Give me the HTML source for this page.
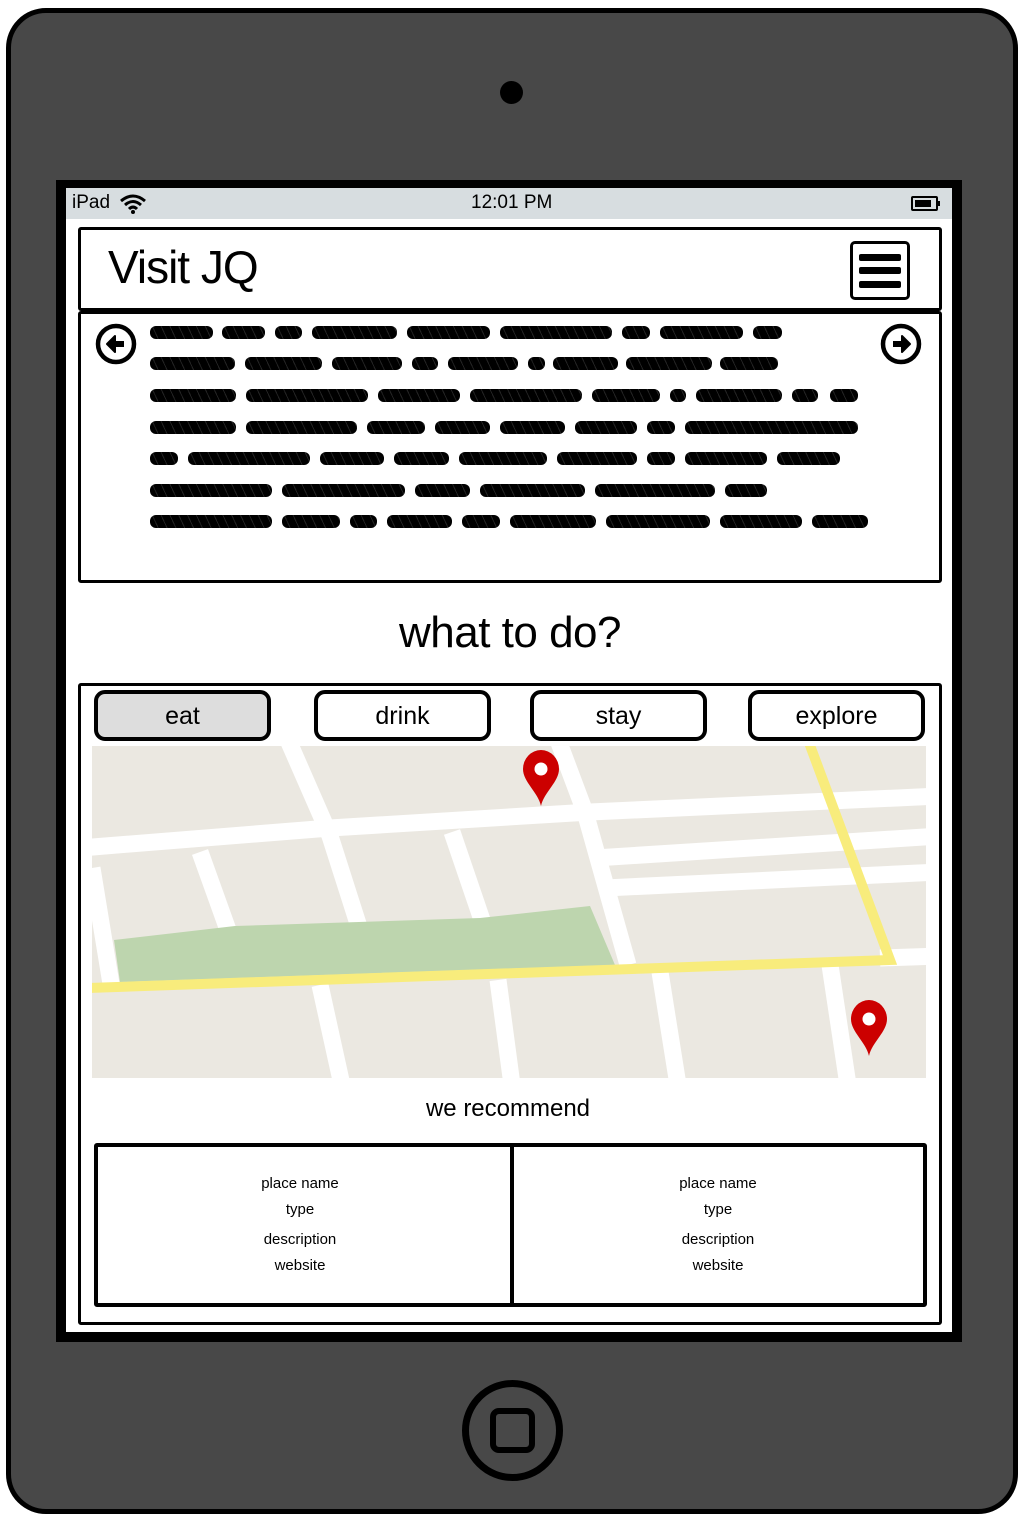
<!DOCTYPE html>
<html><head><meta charset="utf-8"><style>
*{margin:0;padding:0;box-sizing:border-box}
body{width:1024px;height:1520px;background:#fff;position:relative;overflow:hidden;font-family:"Liberation Sans",sans-serif;color:#000}
.a{position:absolute}
.dev{left:6px;top:8px;width:1012px;height:1506px;background:#484848;border:5px solid #000;border-radius:40px}
.scr{left:56px;top:180px;width:906px;height:1162px;background:#000}
.in{left:66px;top:188px;width:886px;height:1144px;background:#fff}
.sb{left:66px;top:188px;width:886px;height:31px;background:#d7dde0;font-size:19px}
.box{border:3px solid #000;border-radius:3px}
.s{position:absolute;height:13px;border-radius:6px;background:repeating-linear-gradient(65deg,#000 0 7px,#222 7px 8px)}
.btn{position:absolute;top:690px;height:51px;width:177px;border:4px solid #000;border-radius:11px;font-size:25px;text-align:center;line-height:44px}
.card{font-size:15px;text-align:center;position:absolute;width:300px}
.card div{position:absolute;width:300px}
</style></head><body>
<div class="a dev"></div>
<div class="a" style="left:500px;top:81px;width:23px;height:23px;border-radius:50%;background:#000"></div>
<div class="a scr"></div>
<div class="a in"></div>
<div class="a sb">
 <span class="a" style="left:6px;top:4px">iPad</span>
 <svg class="a" style="left:53px;top:5px" width="28" height="22" viewBox="0 0 28 22"><path d="M2 8 Q14 -2 26 8" stroke="#000" stroke-width="3" fill="none"/><path d="M6 12 Q14 5 22 12" stroke="#000" stroke-width="3" fill="none"/><path d="M10 16 Q14 12 18 16" stroke="#000" stroke-width="3" fill="none"/><circle cx="14" cy="19" r="2" fill="#000"/></svg>
 <span class="a" style="left:405px;top:4px">12:01 PM</span>
 <div class="a" style="left:845px;top:8px;width:27px;height:15px;border:2px solid #000;border-radius:2px"><div style="margin:2px;width:16px;height:7px;background:#000"></div></div>
 <div class="a" style="left:872px;top:13px;width:2px;height:5px;background:#000"></div>
</div>
<div class="a box" style="left:78px;top:227px;width:864px;height:84px"></div>
<div class="a" style="left:108px;top:240px;font-size:46px;letter-spacing:-1px">Visit JQ</div>
<div class="a" style="left:850px;top:241px;width:60px;height:59px;border:3px solid #000;border-radius:5px"></div>
<div class="a" style="left:859px;top:254px;width:42px;height:7px;background:#000;border-radius:2px"></div>
<div class="a" style="left:859px;top:267px;width:42px;height:7px;background:#000;border-radius:2px"></div>
<div class="a" style="left:859px;top:281px;width:42px;height:7px;background:#000;border-radius:2px"></div>
<div class="a box" style="left:78px;top:311px;width:864px;height:272px"></div>
<svg class="a" style="left:94px;top:322px" width="44" height="44" viewBox="0 0 44 44"><circle cx="22" cy="22" r="18" stroke="#000" stroke-width="4.5" fill="none"/><path d="M30 22 H20" stroke="#000" stroke-width="6"/><path d="M21 14 L13 22 L21 30 Z" fill="#000" stroke="#000" stroke-width="2" stroke-linejoin="round"/></svg>
<svg class="a" style="left:879px;top:322px" width="44" height="44" viewBox="0 0 44 44"><circle cx="22" cy="22" r="18" stroke="#000" stroke-width="4.5" fill="none"/><path d="M14 22 H24" stroke="#000" stroke-width="6"/><path d="M23 14 L31 22 L23 30 Z" fill="#000" stroke="#000" stroke-width="2" stroke-linejoin="round"/></svg>
<div class="s" style="top:326px;left:150px;width:63px"></div><div class="s" style="top:326px;left:222px;width:43px"></div><div class="s" style="top:326px;left:275px;width:27px"></div><div class="s" style="top:326px;left:312px;width:85px"></div><div class="s" style="top:326px;left:407px;width:83px"></div><div class="s" style="top:326px;left:500px;width:112px"></div><div class="s" style="top:326px;left:622px;width:28px"></div><div class="s" style="top:326px;left:660px;width:83px"></div><div class="s" style="top:326px;left:753px;width:29px"></div>
<div class="s" style="top:357px;left:150px;width:85px"></div><div class="s" style="top:357px;left:245px;width:77px"></div><div class="s" style="top:357px;left:332px;width:70px"></div><div class="s" style="top:357px;left:412px;width:26px"></div><div class="s" style="top:357px;left:448px;width:70px"></div><div class="s" style="top:357px;left:528px;width:17px"></div><div class="s" style="top:357px;left:553px;width:65px"></div><div class="s" style="top:357px;left:626px;width:86px"></div><div class="s" style="top:357px;left:720px;width:58px"></div>
<div class="s" style="top:389px;left:150px;width:86px"></div><div class="s" style="top:389px;left:246px;width:122px"></div><div class="s" style="top:389px;left:378px;width:82px"></div><div class="s" style="top:389px;left:470px;width:112px"></div><div class="s" style="top:389px;left:592px;width:68px"></div><div class="s" style="top:389px;left:670px;width:16px"></div><div class="s" style="top:389px;left:696px;width:86px"></div><div class="s" style="top:389px;left:792px;width:26px"></div><div class="s" style="top:389px;left:830px;width:28px"></div>
<div class="s" style="top:421px;left:150px;width:86px"></div><div class="s" style="top:421px;left:246px;width:111px"></div><div class="s" style="top:421px;left:367px;width:58px"></div><div class="s" style="top:421px;left:435px;width:55px"></div><div class="s" style="top:421px;left:500px;width:65px"></div><div class="s" style="top:421px;left:575px;width:62px"></div><div class="s" style="top:421px;left:647px;width:28px"></div><div class="s" style="top:421px;left:685px;width:173px"></div>
<div class="s" style="top:452px;left:150px;width:28px"></div><div class="s" style="top:452px;left:188px;width:122px"></div><div class="s" style="top:452px;left:320px;width:64px"></div><div class="s" style="top:452px;left:394px;width:55px"></div><div class="s" style="top:452px;left:459px;width:88px"></div><div class="s" style="top:452px;left:557px;width:80px"></div><div class="s" style="top:452px;left:647px;width:28px"></div><div class="s" style="top:452px;left:685px;width:82px"></div><div class="s" style="top:452px;left:777px;width:63px"></div>
<div class="s" style="top:484px;left:150px;width:122px"></div><div class="s" style="top:484px;left:282px;width:123px"></div><div class="s" style="top:484px;left:415px;width:55px"></div><div class="s" style="top:484px;left:480px;width:105px"></div><div class="s" style="top:484px;left:595px;width:120px"></div><div class="s" style="top:484px;left:725px;width:42px"></div>
<div class="s" style="top:515px;left:150px;width:122px"></div><div class="s" style="top:515px;left:282px;width:58px"></div><div class="s" style="top:515px;left:350px;width:27px"></div><div class="s" style="top:515px;left:387px;width:65px"></div><div class="s" style="top:515px;left:462px;width:38px"></div><div class="s" style="top:515px;left:510px;width:86px"></div><div class="s" style="top:515px;left:606px;width:104px"></div><div class="s" style="top:515px;left:720px;width:82px"></div><div class="s" style="top:515px;left:812px;width:56px"></div>
<div class="a" style="left:0;width:1020px;top:608px;text-align:center;font-size:44px;letter-spacing:-0.5px">what to do?</div>
<div class="a box" style="left:78px;top:683px;width:864px;height:642px"></div>
<div class="btn" style="left:94px;background:#ddd">eat</div>
<div class="btn" style="left:314px">drink</div>
<div class="btn" style="left:530px">stay</div>
<div class="btn" style="left:748px">explore</div>
<svg class="a" style="left:0;top:0" width="1024" height="1520">
<defs><clipPath id="c"><rect x="92" y="746" width="834" height="332"/></clipPath></defs>
<g clip-path="url(#c)">
<rect x="92" y="746" width="834" height="332" fill="#ebe8e1"/>
<g stroke="#fff" stroke-width="17" fill="none">
<path d="M80 848 L330 828 L590 812 L940 796"/>
<path d="M595 858 L940 836"/>
<path d="M605 888 L940 872"/>
<path d="M288 740 L330 836 L360 930"/>
<path d="M200 852 L228 930"/>
<path d="M452 832 L482 920"/>
<path d="M558 740 L585 812 L628 965"/>
<path d="M92 868 L112 990"/>
<path d="M320 985 L342 1085"/>
<path d="M498 980 L512 1085"/>
<path d="M660 972 L678 1085"/>
<path d="M830 965 L848 1085"/>
<path d="M880 958 L940 956"/>
</g>
<path d="M114 940 L235 926 L480 918 L590 906 L615 965 L120 982 Z" fill="#bdd5ae"/>
<path d="M88 988 L890 960 L808 740" stroke="#f8ec7c" stroke-width="10" fill="none"/>
</g>
<path d="M541 806 C538 792 523 782 523 769 A18 19 0 0 1 559 769 C559 782 544 792 541 806 Z" fill="#c00"/>
<circle cx="541" cy="769" r="6.5" fill="#fff"/>
<path d="M869 1056 C866 1042 851 1032 851 1019 A18 19 0 0 1 887 1019 C887 1032 872 1042 869 1056 Z" fill="#c00"/>
<circle cx="869" cy="1019" r="6.5" fill="#fff"/>
</svg>
<div class="a" style="left:0;width:1016px;top:1095px;text-align:center;font-size:24px">we recommend</div>
<div class="a box" style="left:94px;top:1143px;width:833px;height:164px;border-width:4px"></div>
<div class="a" style="left:510px;top:1145px;width:4px;height:161px;background:#000"></div>
<div class="card" style="left:150px;top:1175px"><div style="top:0">place name</div><div style="top:26px">type</div><div style="top:56px">description</div><div style="top:82px">website</div></div>
<div class="card" style="left:568px;top:1175px"><div style="top:0">place name</div><div style="top:26px">type</div><div style="top:56px">description</div><div style="top:82px">website</div></div>
<div class="a" style="left:462px;top:1380px;width:101px;height:101px;border-radius:50%;border:7px solid #000"></div>
<div class="a" style="left:490px;top:1408px;width:45px;height:45px;border-radius:9px;border:6px solid #000"></div>
</body></html>
